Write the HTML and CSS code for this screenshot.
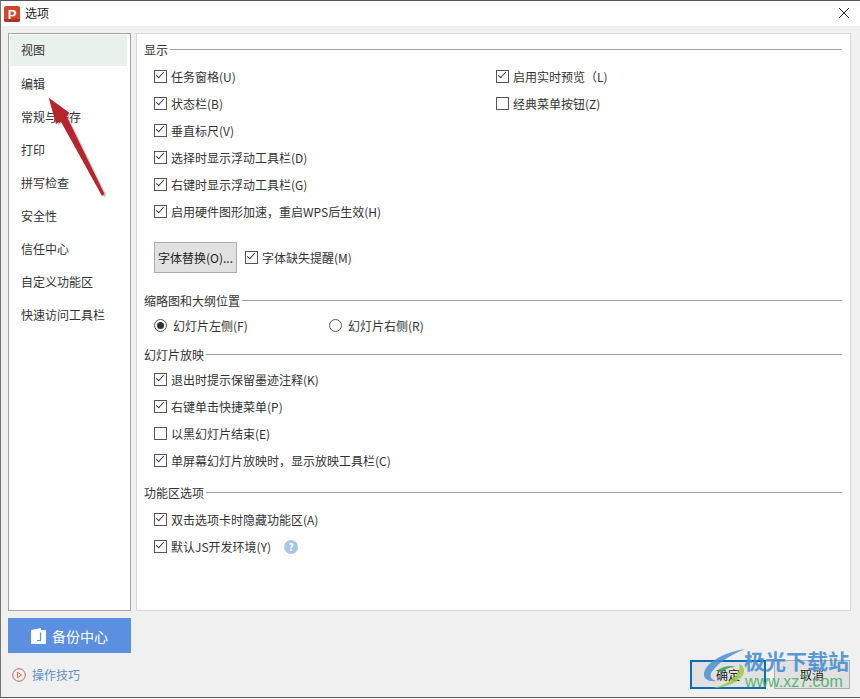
FILE: index.html
```html
<!DOCTYPE html>
<html lang="zh-CN">
<head>
  <meta charset="UTF-8">
  <title>选项</title>
  <link rel="stylesheet" href="styles.css">
</head>
<body>
  <div class="window">
    <div class="titlebar">
      <svg class="app-icon" width="16" height="16" viewBox="0 0 16 16">
        <rect width="16" height="16" rx="2" fill="#d2452f"/>
        <path d="M0 13h16v1a2 2 0 0 1-2 2H2a2 2 0 0 1-2-2z" fill="#a93324"/>
        <text x="8" y="12.5" class="app-letter" text-anchor="middle">P</text>
      </svg>
      <span class="title">选项</span>
      <svg class="close" width="12" height="12" viewBox="0 0 12 12">
        <path d="M1 1l10 10M11 1L1 11" stroke="#222" stroke-width="1" fill="none"/>
      </svg>
    </div>

    <div class="content">
      <ul class="sidebar">
        <li class="active">视图</li>
        <li>编辑</li>
        <li>常规与保存</li>
        <li>打印</li>
        <li>拼写检查</li>
        <li>安全性</li>
        <li>信任中心</li>
        <li>自定义功能区</li>
        <li>快速访问工具栏</li>
      </ul>

      <div class="panel">
        <div class="group-title"><span>显示</span></div>
        <div class="two-col display-opts">
          <div class="col">
            <label class="opt"><i class="box on"></i>任务窗格(U)</label>
            <label class="opt"><i class="box on"></i>状态栏(B)</label>
            <label class="opt"><i class="box on"></i>垂直标尺(V)</label>
            <label class="opt"><i class="box on"></i>选择时显示浮动工具栏(D)</label>
            <label class="opt"><i class="box on"></i>右键时显示浮动工具栏(G)</label>
            <label class="opt"><i class="box on"></i>启用硬件图形加速，重启WPS后生效(H)</label>
          </div>
          <div class="col">
            <label class="opt"><i class="box on"></i>启用实时预览（L)</label>
            <label class="opt"><i class="box"></i>经典菜单按钮(Z)</label>
          </div>
        </div>
        <div class="font-row">
          <button class="btn font-btn">字体替换(O)...</button>
          <label class="opt"><i class="box on"></i>字体缺失提醒(M)</label>
        </div>

        <div class="group-title thumb-title"><span>缩略图和大纲位置</span></div>
        <div class="two-col radio-row">
          <label class="opt"><i class="radio on"></i>幻灯片左侧(F)</label>
          <label class="opt"><i class="radio"></i>幻灯片右侧(R)</label>
        </div>

        <div class="group-title show-title"><span>幻灯片放映</span></div>
        <div class="col">
          <label class="opt"><i class="box on"></i>退出时提示保留墨迹注释(K)</label>
          <label class="opt"><i class="box on"></i>右键单击快捷菜单(P)</label>
          <label class="opt"><i class="box"></i>以黑幻灯片结束(E)</label>
          <label class="opt"><i class="box on"></i>单屏幕幻灯片放映时，显示放映工具栏(C)</label>
        </div>

        <div class="group-title ribbon-title"><span>功能区选项</span></div>
        <div class="col">
          <label class="opt"><i class="box on"></i>双击选项卡时隐藏功能区(A)</label>
          <label class="opt"><i class="box on"></i>默认JS开发环境(Y)<b class="help">?</b></label>
        </div>
      </div>

      <div class="left-foot">
        <div class="backup">
          <svg width="15" height="16" viewBox="0 0 15 16">
            <path d="M0 2l10-2v2h5v14H0z" fill="#fff"/>
            <path d="M9.5 4.5v8H6" fill="none" stroke="#5b8fe0" stroke-width="1.2"/>
          </svg>
          备份中心
        </div>
        <div class="tips">
          <svg width="14" height="14" viewBox="0 0 14 14">
            <circle cx="7" cy="7" r="6.3" fill="none" stroke="#a8705f"/>
            <path d="M5.4 4.2L9.6 7l-4.2 2.8z" fill="none" stroke="#e0714c"/>
          </svg>
          <span>操作技巧</span>
        </div>
      </div>

      <div class="actions">
        <button class="btn primary">确定</button>
        <button class="btn">取消</button>
      </div>
    </div>

    <!-- arrow drawn on top of the dialog -->
    <svg class="arrow" width="80" height="120" viewBox="0 0 80 120">
      <path d="M6.7 6.7L27.3 21.7 24.5 25 62.5 103 60 105 18.5 30 14 33z" fill="#000" opacity=".2" transform="translate(2 1.5)"/>
      <path d="M6.7 6.7L27.3 21.7 24.5 25 62.5 103 60 105 18.5 30 14 33z" fill="#b6252b"/>
    </svg>

    <div class="watermark">
      <svg class="wm-logo" width="48" height="44" viewBox="0 0 48 44">
        <path d="M44 1C24 4 5 14 3 25c-1 6 5 9 12 8C8 31 8 26 14 20 21 12 34 5 44 1z" fill="#4a8fd0" opacity=".85"/>
        <path d="M38 16c3 8-8 20-26 24 14 0 32-8 31-18-.2-3-2-5-5-6z" fill="#9cc84a" opacity=".85"/>
        <path d="M16 23c5-5 14-6 19-4-6 0-11 2-14 6z" fill="#3f9c5a" opacity=".85"/>
      </svg>
      <div class="wm-name">极光下载站</div>
      <div class="wm-url">www.xz7.com</div>
    </div>
  </div>
</body>
</html>
```

FILE: styles.css
```css
html, body { margin: 0; padding: 0; }
body {
  width: 860px; height: 699px;
  overflow: hidden;
  font-family: "Noto Sans CJK SC", "Liberation Sans", sans-serif;
  font-size: 12px;
  color: #333;
}
.window {
  position: relative;
  height: 698px;
  background: #f0f0f0;
  border-top: 1px solid #555;
  border-bottom: 1px solid #555;
  border-left: 1px solid #777;
  box-sizing: border-box;
  display: flex;
  flex-direction: column;
}
.titlebar {
  height: 25px;
  flex: none;
  background: #fff;
  display: flex;
  align-items: center;
  padding: 0 10px 0 3px;
  gap: 5px;
}
.app-letter { font: bold 13px "Liberation Sans", sans-serif; fill: #fff; }
.title { font-size: 12px; color: #222; flex: 1; padding-bottom: 3px; }
.close { margin-bottom: 1px; }

.content {
  display: grid;
  grid-template-columns: 123px 715px;
  grid-template-rows: 578px 1fr;
  column-gap: 5px;
  padding: 7px 0 0 7px;
  flex: 1;
}
.sidebar {
  list-style: none;
  margin: 0;
  padding: 1px;
  background: #fff;
  border: 1px solid #a5a5a5;
}
.sidebar li {
  height: 33px;
  line-height: 31px;
  padding-left: 11px;
  margin-right: 2px;
  color: #333;
}
.sidebar li.active { height: 31px; line-height: 29px; margin-bottom: 2px; background: #e9f1ed; }

.panel {
  background: #fff;
  border: 1px solid #d9d9d9;
  padding: 6px 8px 0 7px;
}
.group-title {
  display: flex;
  align-items: center;
  gap: 2px;
  height: 18px;
  color: #333;
}
.group-title::after {
  content: "";
  flex: 1;
  border-top: 1px solid #a0a0a0;
}
.col { display: flex; flex-direction: column; padding-left: 10px; }
.two-col { display: grid; grid-template-columns: 342px 1fr; padding-left: 10px; }
.two-col .col { padding-left: 0; }
.display-opts { margin-top: 5px; }
.opt {
  display: flex;
  align-items: center;
  height: 27px;
  gap: 4px;
  color: #333;
  white-space: nowrap;
}
.box {
  width: 11px; height: 11px;
  border: 1px solid #555;
  flex: none;
  position: relative;
  background: #fff;
}
.box.on::after {
  content: "";
  position: absolute;
  left: 1px; top: 1px;
  width: 7px; height: 3px;
  border-left: 1.2px solid #333;
  border-bottom: 1.2px solid #333;
  transform: rotate(-48deg);
}
.radio {
  width: 11px; height: 11px;
  border: 1px solid #555;
  border-radius: 50%;
  flex: none;
  position: relative;
  margin-right: 2px;
}
.radio.on::after {
  content: "";
  position: absolute;
  left: 2px; top: 2px;
  width: 7px; height: 7px;
  border-radius: 50%;
  background: #333;
}
.radio-row { grid-template-columns: 175px 1fr; }
.font-row {
  display: flex;
  align-items: center;
  gap: 8px;
  padding-left: 10px;
  margin-top: 17px;
}
.btn {
  height: 29px;
  width: 76px;
  padding: 0;
  background: #e1e1e1;
  border: 1px solid #adadad;
  font: inherit;
  color: #222;
}
.font-btn { width: 83px; height: 31px; }
.thumb-title { margin-top: 18px; }
.radio-row .opt { height: 32px; }
.show-title { margin-top: 4px; }
.show-title + .col { margin-top: 3px; }
.ribbon-title { margin-top: 9px; }
.ribbon-title + .col { margin-top: 5px; }
.help {
  display: inline-block;
  width: 14px; height: 14px;
  line-height: 14px;
  margin-left: 9px;
  border-radius: 50%;
  background: #a6c8e6;
  color: #fff;
  font-size: 10px;
  text-align: center;
}

.left-foot { padding-top: 7px; }
.backup {
  height: 35px;
  background: #5b8fe0;
  color: #fff;
  font-size: 14px;
  display: flex;
  align-items: center;
  justify-content: center;
  gap: 6px;
}
.tips {
  display: flex;
  align-items: center;
  gap: 6px;
  margin: 13px 0 0 4px;
  color: #5e8fc9;
}
.actions {
  display: flex;
  justify-content: flex-end;
  gap: 8px;
  padding: 49px 1px 0 0;
}
.btn.primary { border: 2px solid #0e6cb0; }

.arrow { position: absolute; left: 41px; top: 90px; }
.watermark { position: absolute; left: 700px; top: 646px; width: 155px; height: 50px; }
.wm-logo { position: absolute; left: 0; top: 1px; }
.wm-name {
  position: absolute; left: 43px; top: -2px;
  font-size: 21px; font-weight: bold; color: #4a90d0;
  white-space: nowrap;
  opacity: .9;
}
.wm-url {
  position: absolute; left: 44px; top: 26px;
  font-family: "Liberation Sans", sans-serif;
  font-size: 16px; color: #4fae6b; white-space: nowrap;
  opacity: .9;
}
```
